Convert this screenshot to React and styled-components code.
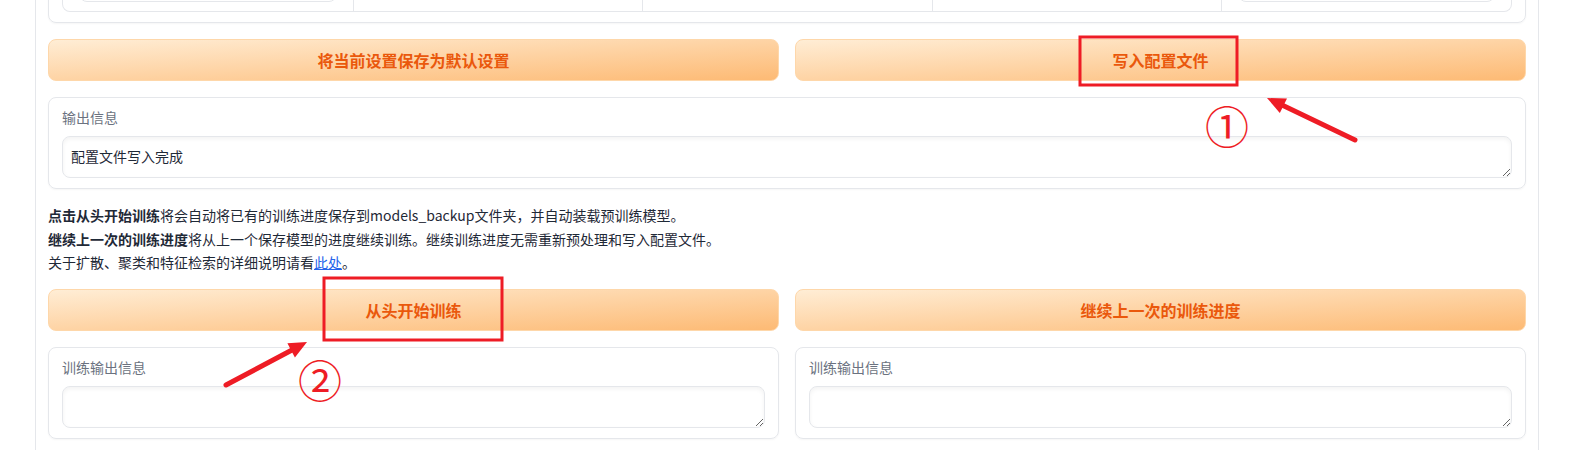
import React from "react";
import styled, { createGlobalStyle } from "styled-components";

const GlobalStyle = createGlobalStyle`
  html, body {
    margin: 0;
    padding: 0;
    background: #fff;
  }
  body {
    font-family: "Noto Sans CJK SC", "Noto Sans", sans-serif;
    color: #1f2937;
    overflow: hidden;
  }
`;

const settingsCells = [true, false, false, false, true];

const App = () => {
  return (
    <Page>
      <GlobalStyle />
      <TabPanel>
        <SettingsBlock>
          <SettingsGrid>
            {settingsCells.map((filled, i) => (
              <SettingsCell key={i}>{filled && <FakeInput />}</SettingsCell>
            ))}
          </SettingsGrid>
        </SettingsBlock>

        <ButtonRow>
          <ActionButton>将当前设置保存为默认设置</ActionButton>
          <ActionButton>写入配置文件</ActionButton>
        </ButtonRow>

        <Block>
          <BlockLabel>输出信息</BlockLabel>
          <TextBox readOnly value="配置文件写入完成" />
        </Block>

        <Info>
          <p>
            <b>点击从头开始训练</b>将会自动将已有的训练进度保存到models_backup文件夹，并自动装载预训练模型。
          </p>
          <p>
            <b>继续上一次的训练进度</b>将从上一个保存模型的进度继续训练。继续训练进度无需重新预处理和写入配置文件。
          </p>
          <p>
            关于扩散、聚类和特征检索的详细说明请看<a href="#">此处</a>。
          </p>
        </Info>

        <ButtonRow>
          <ActionButton>从头开始训练</ActionButton>
          <ActionButton>继续上一次的训练进度</ActionButton>
        </ButtonRow>

        <ButtonRow>
          <Block>
            <BlockLabel>训练输出信息</BlockLabel>
            <TextBox readOnly value="" />
          </Block>
          <Block>
            <BlockLabel>训练输出信息</BlockLabel>
            <TextBox readOnly value="" />
          </Block>
        </ButtonRow>
      </TabPanel>

      {/* red markup drawn over the screenshot */}
      <Markup viewBox="0 0 1572 450" width="1572" height="450">
        <rect x="1080" y="37" width="157" height="48" fill="none" stroke="#ee1c25" strokeWidth="3" />
        <line x1="1355" y1="140" x2="1282" y2="105" stroke="#ee1c25" strokeWidth="5" strokeLinecap="round" />
        <polygon points="1267,98 1287,98.6 1279.8,113" fill="#ee1c25" />
        <MarkNumber x="1227" y="125">①</MarkNumber>

        <rect x="324" y="278" width="178" height="62" fill="none" stroke="#ee1c25" strokeWidth="3" />
        <line x1="226" y1="385" x2="292" y2="350" stroke="#ee1c25" strokeWidth="5" strokeLinecap="round" />
        <polygon points="307,342 294.9,357.5 287.4,343.3" fill="#ee1c25" />
        <MarkNumber x="320" y="379">②</MarkNumber>
      </Markup>
    </Page>
  );
};

export default App;

const Page = styled.div`
  position: relative;
  width: 1572px;
  height: 450px;
  overflow: hidden;
`;

const TabPanel = styled.div`
  margin-left: 35px;
  width: 1504px;
  min-height: 450px;
  box-sizing: border-box;
  border-left: 1px solid #e5e7eb;
  border-right: 1px solid #e5e7eb;
  padding: 0 12px;
  display: flex;
  flex-direction: column;
  gap: 16px;
`;

const SettingsBlock = styled.div`
  margin-top: -57px;
  height: 80px;
  box-sizing: border-box;
  border: 1px solid #e5e7eb;
  border-radius: 8px;
  padding: 0 13px 10px;
  display: flex;
  box-shadow: 0 1px 2px rgba(0, 0, 0, 0.04);
`;

const SettingsGrid = styled.div`
  flex: 1;
  display: grid;
  grid-template-columns: repeat(5, 1fr);
  border: 1px solid #e5e7eb;
  border-top: none;
  border-radius: 0 0 8px 8px;
`;

const SettingsCell = styled.div`
  display: flex;
  align-items: flex-end;
  padding: 0 16px 9px;

  & + & {
    border-left: 1px solid #e5e7eb;
  }
`;

const FakeInput = styled.div`
  flex: 1;
  height: 34px;
  border: 1px solid #e5e7eb;
  border-radius: 8px;
`;

const ButtonRow = styled.div`
  display: grid;
  grid-template-columns: 1fr 1fr;
  gap: 16px;
`;

const ActionButton = styled.button`
  height: 42px;
  border: 1px solid #fed7aa;
  border-radius: 8px;
  background: linear-gradient(to bottom right, #ffedd5, #fdba74);
  color: #ea580c;
  font-family: inherit;
  font-size: 16px;
  font-weight: 700;
  cursor: pointer;
`;

const Block = styled.div`
  border: 1px solid #e5e7eb;
  border-radius: 8px;
  padding: 10px 13px;
  display: flex;
  flex-direction: column;
  gap: 8px;
  box-shadow: 0 1px 2px rgba(0, 0, 0, 0.04);
`;

const BlockLabel = styled.span`
  font-size: 14px;
  line-height: 20px;
  margin-top: -1px;
  margin-bottom: 1px;
  color: #6b7280;
`;

const TextBox = styled.textarea`
  height: 42px;
  box-sizing: border-box;
  border: 1px solid #e5e7eb;
  border-radius: 8px;
  padding: 9px 8px 11px;
  font-family: inherit;
  font-size: 14px;
  line-height: 20px;
  color: #1f2937;
  resize: vertical;
  outline: none;
  box-shadow: inset 0 2px 4px rgba(0, 0, 0, 0.05);
`;

const Info = styled.div`
  margin: -1px 0 -2px;
  font-size: 14px;
  line-height: 23.5px;
  color: #1f2937;

  p {
    margin: 0;
  }

  b {
    font-weight: 700;
  }

  a {
    color: #2563eb;
    text-decoration: underline;
  }
`;

const Markup = styled.svg`
  position: absolute;
  top: 0;
  left: 0;
  pointer-events: none;
`;

const MarkNumber = styled.text`
  font-family: "Noto Sans CJK SC", sans-serif;
  font-size: 44px;
  fill: #ee1c25;
  text-anchor: middle;
  dominant-baseline: central;
`;
